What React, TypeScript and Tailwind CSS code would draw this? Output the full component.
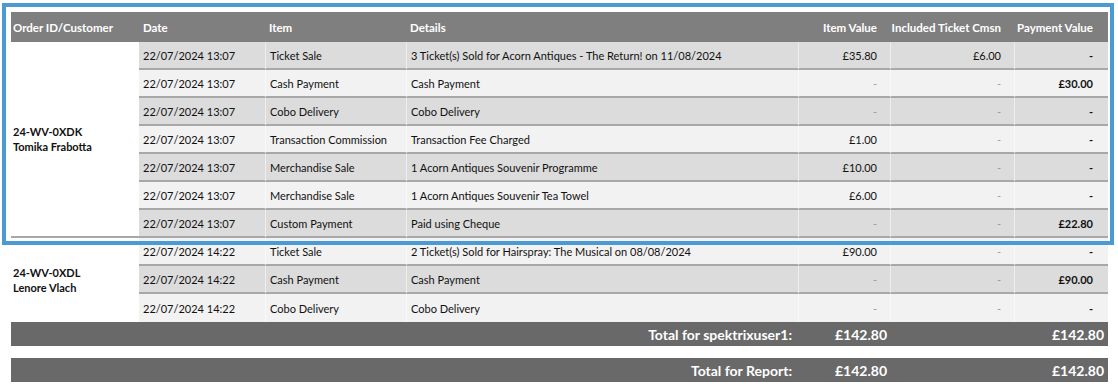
type Line = {
  date: string;
  item: string;
  details: string;
  itemValue: string;
  cmsn: string;
  payment: string;
};

type Order = {
  id: string;
  customer: string;
  lines: Line[];
};

const orders: Order[] = [
  {
    id: '24-WV-0XDK',
    customer: 'Tomika Frabotta',
    lines: [
      { date: '22/07/2024 13:07', item: 'Ticket Sale', details: '3 Ticket(s) Sold for Acorn Antiques - The Return! on 11/08/2024', itemValue: '£35.80', cmsn: '£6.00', payment: '-' },
      { date: '22/07/2024 13:07', item: 'Cash Payment', details: 'Cash Payment', itemValue: '-', cmsn: '-', payment: '£30.00' },
      { date: '22/07/2024 13:07', item: 'Cobo Delivery', details: 'Cobo Delivery', itemValue: '-', cmsn: '-', payment: '-' },
      { date: '22/07/2024 13:07', item: 'Transaction Commission', details: 'Transaction Fee Charged', itemValue: '£1.00', cmsn: '-', payment: '-' },
      { date: '22/07/2024 13:07', item: 'Merchandise Sale', details: '1 Acorn Antiques Souvenir Programme', itemValue: '£10.00', cmsn: '-', payment: '-' },
      { date: '22/07/2024 13:07', item: 'Merchandise Sale', details: '1 Acorn Antiques Souvenir Tea Towel', itemValue: '£6.00', cmsn: '-', payment: '-' },
      { date: '22/07/2024 13:07', item: 'Custom Payment', details: 'Paid using Cheque', itemValue: '-', cmsn: '-', payment: '£22.80' },
    ],
  },
  {
    id: '24-WV-0XDL',
    customer: 'Lenore Vlach',
    lines: [
      { date: '22/07/2024 14:22', item: 'Ticket Sale', details: '2 Ticket(s) Sold for Hairspray: The Musical on 08/08/2024', itemValue: '£90.00', cmsn: '-', payment: '-' },
      { date: '22/07/2024 14:22', item: 'Cash Payment', details: 'Cash Payment', itemValue: '-', cmsn: '-', payment: '£90.00' },
      { date: '22/07/2024 14:22', item: 'Cobo Delivery', details: 'Cobo Delivery', itemValue: '-', cmsn: '-', payment: '-' },
    ],
  },
];

function Money({ value }: { value: string }) {
  if (value === '-') return <span className="text-[#9a9a9a]">-</span>;
  return <span>{value}</span>;
}

function TotalBar({ label, itemValue, payment }: { label: string; itemValue: string; payment: string }) {
  return (
    <tr className="bg-[#696969] text-white font-bold text-[14px]">
      <td colSpan={4} className="h-[24px] p-0 pr-[6px] text-right">{label}</td>
      <td className="p-0 pr-[3px] text-right">{itemValue}</td>
      <td className="p-0"></td>
      <td className="p-0 pr-[4px] text-right">{payment}</td>
    </tr>
  );
}

export default function App() {
  let rowIndex = 0;

  return (
    <div className="relative w-[1118px] h-[389px] bg-white font-[Lato,sans-serif] text-[#111]">
      <div className="pt-[12px] pl-[11px]">
        <table className="table-fixed w-[1097px] border-separate border-spacing-0 text-[11px]">
          <colgroup>
            <col className="w-[128px]" />
            <col className="w-[126px]" />
            <col className="w-[141px]" />
            <col className="w-[392px]" />
            <col className="w-[92px]" />
            <col className="w-[124px]" />
            <col className="w-[94px]" />
          </colgroup>
          <thead>
            <tr className="bg-[#7f7f7f] text-white font-bold text-left text-[11.5px]">
              <th className="h-[30px] p-0 pt-[2px] pl-[2px] font-bold">Order ID/Customer</th>
              <th className="p-0 pt-[2px] pl-[4px] font-bold">Date</th>
              <th className="p-0 pt-[2px] pl-[4px] font-bold">Item</th>
              <th className="p-0 pt-[2px] pl-[4px] font-bold">Details</th>
              <th className="p-0 pt-[2px] pr-[13px] text-right font-bold">Item Value</th>
              <th className="p-0 pt-[2px] pr-[13px] text-right font-bold">Included Ticket Cmsn</th>
              <th className="p-0 pt-[2px] pr-[15px] text-right font-bold">Payment Value</th>
            </tr>
          </thead>
          <tbody>
            {orders.map((order, oi) =>
              order.lines.map((line, li) => {
                const dark = rowIndex++ % 2 === 0;
                const last = li === order.lines.length - 1;
                const lastOrder = oi === orders.length - 1;
                const border = last && lastOrder ? '' : 'border-b-2 border-[#a8a8a8]';
                const bg = dark ? 'bg-[#dcdcdc]' : 'bg-[#f2f2f2]';
                const cell = `p-0 pt-[2px] h-[28px] ${bg} ${border}`;
                return (
                  <tr key={`${order.id}-${li}`}>
                    {li === 0 && (
                      <td
                        rowSpan={order.lines.length}
                        className={`p-0 pl-[2px] bg-white align-middle font-bold leading-[15px] ${lastOrder ? '' : 'border-b-2 border-[#a8a8a8]'}`}
                      >
                        <div>{order.id}</div>
                        <div>{order.customer}</div>
                      </td>
                    )}
                    <td className={`${cell} pl-[4px]`}>{line.date}</td>
                    <td className={`${cell} pl-[4px] border-l border-l-white/50`}>{line.item}</td>
                    <td className={`${cell} pl-[4px] border-l border-l-white/50`}>{line.details}</td>
                    <td className={`${cell} pr-[13px] text-right border-l border-l-white/50`}>
                      <Money value={line.itemValue} />
                    </td>
                    <td className={`${cell} pr-[13px] text-right border-l border-l-white/50`}>
                      <Money value={line.cmsn} />
                    </td>
                    <td className={`${cell} pr-[15px] text-right font-bold border-l border-l-white/50`}>
                      {line.payment}
                    </td>
                  </tr>
                );
              })
            )}
            <TotalBar label="Total for spektrixuser1:" itemValue="£142.80" payment="£142.80" />
            <tr>
              <td colSpan={7} className="h-[12px] p-0"></td>
            </tr>
            <TotalBar label="Total for Report:" itemValue="£142.80" payment="£142.80" />
          </tbody>
        </table>
      </div>

      {/* highlight frame over the first order */}
      <div className="absolute left-[2px] top-[3px] w-[1112px] h-[242px] border-4 border-[#4a9ad4] pointer-events-none" />
    </div>
  );
}
